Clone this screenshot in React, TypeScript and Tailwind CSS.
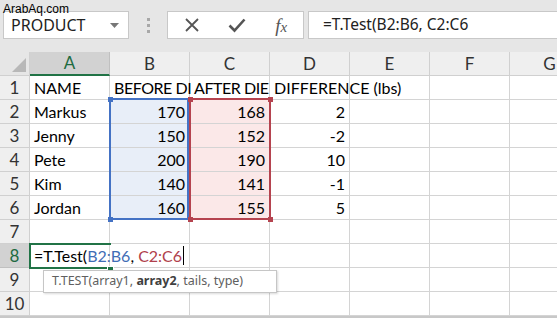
import React from "react";

const COLS = ["A", "B", "C", "D", "E", "F", "G"];

type Cell = { v?: React.ReactNode; right?: boolean; bg?: string; tight?: boolean };

const data: Cell[][] = [
  [{ v: "NAME" }, { v: "BEFORE DI", tight: true }, { v: "AFTER DIE", tight: true }, { v: "DIFFERENCE (lbs)" }, {}, {}, {}],
  [{ v: "Markus" }, { v: "170", right: true, bg: "bg-[#e8eef8]" }, { v: "168", right: true, bg: "bg-[#fbe8e8]" }, { v: "2", right: true }, {}, {}, {}],
  [{ v: "Jenny" }, { v: "150", right: true, bg: "bg-[#e8eef8]" }, { v: "152", right: true, bg: "bg-[#fbe8e8]" }, { v: "-2", right: true }, {}, {}, {}],
  [{ v: "Pete" }, { v: "200", right: true, bg: "bg-[#e8eef8]" }, { v: "190", right: true, bg: "bg-[#fbe8e8]" }, { v: "10", right: true }, {}, {}, {}],
  [{ v: "Kim" }, { v: "140", right: true, bg: "bg-[#e8eef8]" }, { v: "141", right: true, bg: "bg-[#fbe8e8]" }, { v: "-1", right: true }, {}, {}, {}],
  [{ v: "Jordan" }, { v: "160", right: true, bg: "bg-[#e8eef8]" }, { v: "155", right: true, bg: "bg-[#fbe8e8]" }, { v: "5", right: true }, {}, {}, {}],
  [{}, {}, {}, {}, {}, {}, {}],
  [
    {
      v: (
        <span className="flex items-center">
          <span>=T.Test(</span>
          <span className="text-[#3f6db5]">B2:B6</span>
          <span>,&nbsp;</span>
          <span className="text-[#b0404c]">C2:C6</span>
          <span className="inline-block w-px h-[19px] bg-black ml-[1px]" />
        </span>
      ),
    },
    {}, {}, {}, {}, {}, {},
  ],
  [{}, {}, {}, {}, {}, {}, {}],
  [{}, {}, {}, {}, {}, {}, {}],
];

export default function App() {
  return (
    <div className="w-[557px] h-[318px] overflow-hidden bg-white relative font-['Lato',sans-serif] text-black select-none">
      {/* top formula bar */}
      <div className="h-[52px] bg-[#e6e6e6] relative flex items-start pt-[11px]">
        <div className="absolute left-[3px] top-[3px] z-10 text-[12px] leading-[12px] font-['Liberation_Sans',sans-serif] text-black">
          ArabAq.com
        </div>
        <div className="ml-[3px] w-[126px] h-[28px] bg-white border border-[#c8c8c8] flex items-center justify-between pl-[7px] pr-[9px] font-['Noto_Sans',sans-serif] text-[16px] leading-none text-[#222]">
          <span>PRODUCT</span>
          <svg width="9" height="5" viewBox="0 0 9 5">
            <path d="M0 0 L9 0 L4.5 5 Z" fill="#777" />
          </svg>
        </div>
        <div className="w-[38px] h-[28px] flex flex-col items-center justify-center gap-[3px]">
          <span className="w-[3px] h-[3px] bg-[#a8a8a8]" />
          <span className="w-[3px] h-[3px] bg-[#a8a8a8]" />
          <span className="w-[3px] h-[3px] bg-[#a8a8a8]" />
        </div>
        <div className="w-[137px] h-[28px] bg-white border border-[#c8c8c8] flex items-center">
          <div className="w-[46px] flex justify-center pl-[2px]">
            <svg width="16" height="16" viewBox="0 0 16 16">
              <path d="M2 2 L14 14 M14 2 L2 14" stroke="#555" strokeWidth="1.8" />
            </svg>
          </div>
          <div className="w-[46px] flex justify-center">
            <svg width="18" height="16" viewBox="0 0 18 16">
              <path d="M1.5 8.5 L6.5 13.5 L16.5 2.5" stroke="#555" strokeWidth="2.6" fill="none" />
            </svg>
          </div>
          <div className="w-[44px] flex justify-center font-['Liberation_Serif',serif] italic text-[19px] text-[#555] leading-none">
            <span>f</span>
            <span className="text-[15px] mt-[4px]">x</span>
          </div>
        </div>
        <div className="ml-[4px] flex-1 h-[28px] bg-white border border-[#c8c8c8] border-r-0 flex items-center pl-[14px] font-['Noto_Sans',sans-serif] text-[15.5px] text-[#222]">
          =T.Test(B2:B6, C2:C6
        </div>
      </div>

      {/* grid */}
      <div className="relative">
        {/* header row */}
        <div className="flex h-[24px]">
          <div className="w-[30px] shrink-0 bg-[#e6e6e6] border-r border-b border-[#d0d0d0] relative overflow-hidden">
            <svg className="absolute right-[3px] bottom-[3px]" width="14" height="14" viewBox="0 0 14 14">
              <path d="M14 0 L14 14 L0 14 Z" fill="#b8b8b8" />
            </svg>
          </div>
          {COLS.map((c, i) => (
            <div
              key={c}
              className={
                i === 0
                  ? "w-[80px] shrink-0 bg-[#d2d2d2] border-r border-[#c0c0c0] border-b-2 border-b-[#217346] flex items-center justify-center text-[17px] text-[#1e6b41]"
                  : "w-[80px] shrink-0 bg-[#efefef] border-r border-b border-[#d0d0d0] flex items-center justify-center text-[17px] text-[#333]"
              }
            >
              {c}
            </div>
          ))}
        </div>
        {data.map((row, r) => (
          <div key={r} className="flex h-[24px]">
            <div
              className={
                r === 7
                  ? "w-[30px] shrink-0 bg-[#d2d2d2] border-r border-b border-[#c0c0c0] flex items-center justify-center text-[17px] text-[#1e6b41]"
                  : "w-[30px] shrink-0 bg-[#efefef] border-r border-b border-[#d0d0d0] flex items-center justify-center text-[17px] text-[#333]"
              }
            >
              {r + 1}
            </div>
            {row.map((cell, c) => (
              <div
                key={c}
                className={`w-[80px] shrink-0 border-r border-b border-[#d4d4d4] flex items-center text-[16px] leading-none whitespace-nowrap ${
                  cell.tight ? "pl-[4px] pr-0 tracking-[-0.45px]" : "px-[4px]"
                } ${cell.right ? "justify-end" : "justify-start"} ${cell.bg ?? ""}`}
              >
                {cell.v !== undefined && <span className="relative z-[3]">{cell.v}</span>}
              </div>
            ))}
          </div>
        ))}

        {/* B range */}
        <div className="absolute left-[109px] top-[46px] w-[80px] h-[122px] border-2 border-[#4472c4] pointer-events-none" />
        <div className="absolute left-[108px] top-[45px] w-[5px] h-[5px] bg-[#4472c4]" />
        <div className="absolute left-[108px] top-[165px] w-[5px] h-[5px] bg-[#4472c4]" />
        {/* C range */}
        <div className="absolute left-[189px] top-[46px] w-[82px] h-[122px] border-2 border-[#b5434f] pointer-events-none" />
        <div className="absolute left-[188px] top-[45px] w-[5px] h-[5px] bg-[#b5434f]" />
        <div className="absolute left-[268px] top-[45px] w-[5px] h-[5px] bg-[#b5434f]" />
        <div className="absolute left-[188px] top-[165px] w-[5px] h-[5px] bg-[#b5434f]" />
        <div className="absolute left-[268px] top-[165px] w-[5px] h-[5px] bg-[#b5434f]" />

        {/* active cell (edit mode: right edge open) */}
        <div className="absolute left-[29px] top-[191px] w-[82px] h-[26px] border-2 border-r-0 border-[#217346] pointer-events-none z-[2]" />
        <div className="absolute left-[107px] top-[214px] w-[5px] h-[5px] bg-[#217346] border border-white box-content z-[2]" />

        {/* tooltip */}
        <div className="absolute left-[43px] top-[218px] w-[234px] h-[23px] z-[4] bg-white border border-[#c6c6c6] shadow-[1px_1px_2px_rgba(0,0,0,0.15)] flex items-center pl-[8px] font-['Noto_Sans',sans-serif] text-[12.5px] text-[#606060] whitespace-nowrap">
          T.TEST(array1,&nbsp;<b className="text-[#404040]">array2</b>, tails, type)
        </div>
      </div>
      <div className="h-[2px] bg-[#c8c8c8]" />
    </div>
  );
}
